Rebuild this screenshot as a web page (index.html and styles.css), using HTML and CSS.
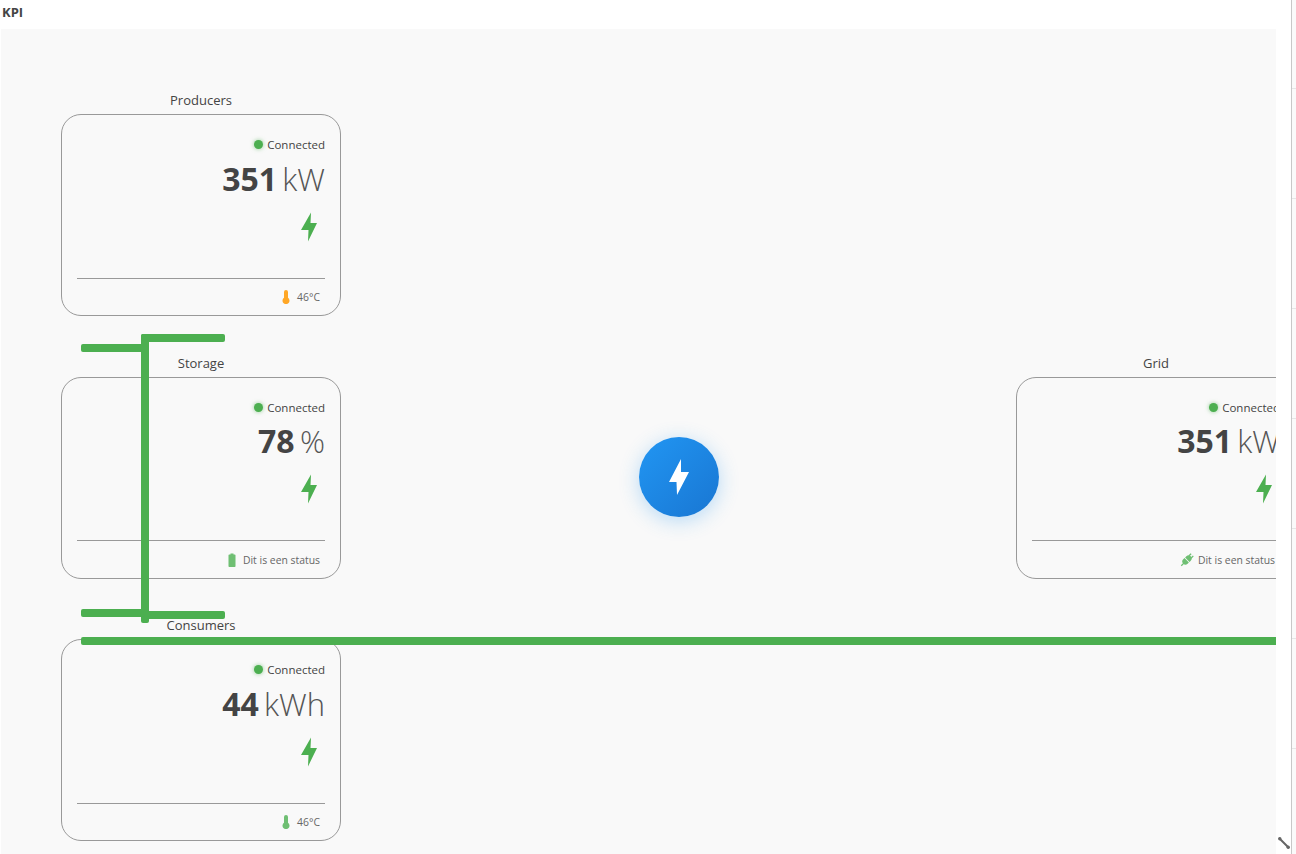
FILE: index.html
```html
<!DOCTYPE html>
<html lang="en">
<head>
<meta charset="utf-8">
<title>KPI</title>
<link rel="stylesheet" href="styles.css">
</head>
<body>
<div class="app">
  <main class="main">
    <h1 class="heading">KPI</h1>
    <section class="canvas">
      <article class="node node--producers">
        <h2 class="node-title">Producers</h2>
        <div class="card">
          <div class="status"><span class="dot"></span>Connected</div>
          <div class="value"><b>351</b> <span>kW</span></div>
          <svg class="bolt" viewBox="0 0 16 30"><polygon points="10,0.5 0,18 7.5,18 7,29.5 16,11 9.5,11"/></svg>
          <div class="foot">
            <svg class="foot-icon foot-icon--orange" viewBox="0 0 8 14"><path d="M2 2a2 2 0 0 1 4 0v5.800a3.500 3.500 0 1 1-4 0z"/></svg>
            46°C
          </div>
        </div>
      </article>

      <article class="node node--storage">
        <h2 class="node-title">Storage</h2>
        <div class="card">
          <div class="status"><span class="dot"></span>Connected</div>
          <div class="value"><b>78</b> <span>%</span></div>
          <svg class="bolt" viewBox="0 0 16 30"><polygon points="10,0.5 0,18 7.5,18 7,29.5 16,11 9.5,11"/></svg>
          <div class="foot">
            <svg class="foot-icon foot-icon--green" viewBox="0 0 8 14"><path d="M2.500 0.500h3v1h1.200a.8.8 0 0 1 .8.8v10.900a.8.8 0 0 1-.8.8H1.300a.8.8 0 0 1-.8-.8V2.300a.8.8 0 0 1 .8-.8h1.200z"/></svg>
            Dit is een status
          </div>
        </div>
      </article>

      <article class="node node--consumers">
        <h2 class="node-title">Consumers</h2>
        <div class="card">
          <div class="status"><span class="dot"></span>Connected</div>
          <div class="value"><b>44</b> <span>kWh</span></div>
          <svg class="bolt" viewBox="0 0 16 30"><polygon points="10,0.5 0,18 7.5,18 7,29.5 16,11 9.5,11"/></svg>
          <div class="foot">
            <svg class="foot-icon foot-icon--green" viewBox="0 0 8 14"><path d="M2 2a2 2 0 0 1 4 0v5.800a3.500 3.500 0 1 1-4 0z"/></svg>
            46°C
          </div>
        </div>
      </article>

      <article class="node node--grid">
        <h2 class="node-title">Grid</h2>
        <div class="card">
          <div class="status"><span class="dot"></span>Connected</div>
          <div class="value"><b>351</b> <span>kW</span></div>
          <svg class="bolt" viewBox="0 0 16 30"><polygon points="10,0.5 0,18 7.5,18 7,29.5 16,11 9.5,11"/></svg>
          <div class="foot">
            <svg class="foot-icon foot-icon--plug" viewBox="-9.500 -9.500 19 19"><g transform="rotate(-45)">
              <rect x="-11" y="-.9" width="5" height="1.800"/>
              <path d="M-.6-4.200h-2.400a4.200 4.200 0 0 0 0 8.400h2.400z"/>
              <path d="M.6-4.200h2.400a4.200 4.200 0 0 1 0 8.400H.6z"/>
              <rect x="6" y="-3" width="4" height="1.800"/>
              <rect x="6" y="1.200" width="4" height="1.800"/>
            </g></svg>
            Dit is een status
          </div>
        </div>
      </article>

      <div class="hub">
        <svg class="hub-bolt" viewBox="0 0 20 36"><polygon points="12,0 0,23 7.500,23 8,36 20,13 12,13"/></svg>
      </div>

      <svg class="links" viewBox="0 0 1275 825" aria-hidden="true">
        <rect x="80" y="315" width="66" height="8" rx="2"/>
        <rect x="140" y="305" width="84" height="8" rx="2"/>
        <rect x="140" y="305" width="8" height="289" rx="2"/>
        <rect x="80" y="580" width="64" height="8" rx="2"/>
        <rect x="146" y="582" width="78" height="8" rx="2"/>
        <rect x="80" y="608" width="1200" height="8" rx="2"/>
      </svg>
    </section>
    <svg class="resize" viewBox="0 0 14 14" aria-hidden="true">
      <path d="M2.500 2.500l9 9"/>
      <circle cx="2.800" cy="2.800" r="1.700"/>
      <circle cx="11.200" cy="11.200" r="1.700"/>
    </svg>
  </main>
  <aside class="rail">
    <div class="rail-cell"></div><div class="rail-cell"></div><div class="rail-cell"></div>
    <div class="rail-cell"></div><div class="rail-cell"></div><div class="rail-cell"></div>
    <div class="rail-cell"></div>
  </aside>
</div>
</body>
</html>
```

FILE: styles.css
```css
* { box-sizing: border-box; }

html, body {
  margin: 0;
  height: 854px;
  overflow: hidden;
  background: #fff;
  font-family: "Open Sans", "Noto Sans", "Liberation Sans", sans-serif;
  color: #444;
}

.app {
  display: flex;
  width: 1296px;
  height: 854px;
}

.main {
  position: relative;
  width: 1292px;
  height: 854px;
  padding-left: 1px;
  border-right: 1px solid #c8c8c8;
  flex: none;
}

.heading {
  margin: 0;
  height: 29px;
  padding-left: 1px;
  font-size: 13px;
  line-height: 24px;
  font-weight: 700;
  color: #444;
}

.canvas {
  position: relative;
  width: 1275px;
  height: 825px;
  background: #f9f9f9;
  overflow: hidden;
}

.node {
  position: absolute;
  width: 280px;
}
.node--producers { left: 60px; top: 62px; }
.node--storage { left: 60px; top: 325px; }
.node--consumers { left: 60px; top: 587px; }
.node--grid { left: 1015px; top: 325px; }

.node-title {
  margin: 0;
  height: 23px;
  text-align: center;
  font-size: 13px;
  font-weight: 400;
  line-height: 19px;
  color: #444;
}

.card {
  height: 202px;
  display: flex;
  flex-direction: column;
  align-items: flex-end;
  padding: 19px 15px 0;
  border: 1px solid #999;
  border-radius: 20px;
}

.status {
  display: flex;
  align-items: center;
  height: 20px;
  font-size: 11.500px;
  color: #444;
}

.dot {
  width: 9px;
  height: 9px;
  margin-right: 4px;
  margin-top: 0;
  border-radius: 50%;
  background: #4caf50;
  box-shadow: 0 0 4px rgba(76, 175, 80, .6);
}

.value {
  height: 44px;
  margin-top: 3px;
  font-size: 32px;
  line-height: 44px;
  white-space: nowrap;
  word-spacing: -3px;
  color: #555;
}
.value b { font-weight: 700; color: #444; }
.value span { font-weight: 300; font-size: 31px; }

.node--storage .value,
.node--grid .value { margin-top: 2px; }

.bolt {
  width: 16px;
  height: 30px;
  margin: 11px 8px 0 0;
  fill: #4caf50;
  flex: none;
}

.foot {
  align-self: stretch;
  display: flex;
  align-items: center;
  justify-content: flex-end;
  margin-top: 36px;
  padding: 7px 5px 0 0;
  height: 30px;
  border-top: 1px solid #999;
  font-size: 10.400px;
  color: #666;
}

.node--storage .foot,
.node--grid .foot {
  padding-top: 8px;
  height: 31px;
}

.foot-icon {
  width: 8px;
  height: 14px;
  margin-right: 7px;
  flex: none;
}
.foot-icon--orange { fill: #ffa726; }
.foot-icon--green { fill: #6fbf73; }
.foot-icon--plug { width: 14px; margin-right: 4px; fill: #6fbf73; }

.hub {
  position: absolute;
  left: 638px;
  top: 408px;
  width: 80px;
  height: 80px;
  display: flex;
  align-items: center;
  justify-content: center;
  border-radius: 50%;
  background: linear-gradient(135deg, #2196f3, #1976d2);
  box-shadow: 0 4px 20px rgba(33, 150, 243, .3);
}
.hub-bolt {
  width: 20px;
  height: 36px;
  fill: #fff;
}

.links {
  position: absolute;
  inset: 0;
  width: 1275px;
  height: 825px;
  fill: #4caf50;
  pointer-events: none;
}

.resize {
  position: absolute;
  left: 1277px;
  top: 836px;
  width: 14px;
  height: 14px;
  fill: #666;
  stroke: #666;
  stroke-width: 2;
  stroke-linecap: round;
}
.resize circle { stroke: none; }

.rail {
  flex: 1;
  background: #fafafa;
}
.rail-cell {
  height: 110px;
  border-bottom: 1px solid #e6e6e6;
}
.rail-cell:first-child { height: 89px; }
```
